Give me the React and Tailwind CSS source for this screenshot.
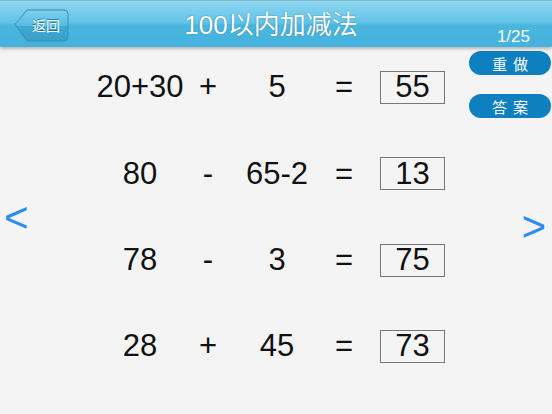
const rows = [
  { a: "20+30", op: "+", b: "5", ans: "55" },
  { a: "80", op: "-", b: "65-2", ans: "13" },
  { a: "78", op: "-", b: "3", ans: "75" },
  { a: "28", op: "+", b: "45", ans: "73" },
];

const BackButton = () => (
  <div className="relative w-[56px] h-[33px] ml-[13px] mt-[8px]">
    <svg width="56" height="33" viewBox="0 0 56 33" className="block">
      <defs>
        <linearGradient id="bb" x1="0" y1="0" x2="0" y2="1">
          <stop offset="0" stopColor="#7fd0ee" />
          <stop offset="0.5" stopColor="#56bde2" />
          <stop offset="0.51" stopColor="#3eaad4" />
          <stop offset="1" stopColor="#3a9fc9" />
        </linearGradient>
      </defs>
      <path
        d="M2 15.5 L14 1 H51 Q55 1 55 5 V28 Q55 32 51 32 H14 Z"
        fill="url(#bb)"
        stroke="#3b8fb4"
        strokeWidth="1"
      />
    </svg>
    <span className="absolute inset-0 flex items-center justify-center pl-[10px] text-[14px] text-white font-['Noto_Sans_CJK_SC',sans-serif] [text-shadow:0_-1px_0_rgba(0,60,90,0.5)]">
      返回
    </span>
  </div>
);

export default function App() {
  return (
    <div className="w-[552px] h-[414px] bg-[#f4f4f4] overflow-hidden font-['Liberation_Sans',Arial,sans-serif] text-[#111]">
      <header className="relative z-10 h-[47px] border-t border-[#7fb9cc] bg-[linear-gradient(to_bottom,#8ed7f1_0%,#5fc3e7_48%,#49b6df_52%,#44b2dc_100%)] shadow-[0_2px_3px_rgba(0,0,0,0.25)] grid grid-cols-[1fr_auto_1fr]">
        <BackButton />
        <div className="pr-[10px] pt-[9px] text-[26px] leading-[30px] text-white font-['Liberation_Sans','Noto_Sans_CJK_SC',sans-serif] [text-shadow:0_0_1px_#3d86a6,0_0_1px_#3d86a6]">
          100以内加减法
        </div>
        <div className="flex justify-end items-end pr-[22px] pb-0 text-[17px] leading-[20px] text-white">
          1/25
        </div>
      </header>

      <div className="flex h-[367px]">
        <div className="w-[90px] pl-[4px] pt-[147px] text-[42px] leading-[48px] text-[#2d8cf4]">
          &lt;
        </div>

        <div className="grid grid-cols-[100px_36px_102px_32px_85px] gap-y-[53.3px] content-start pt-[24px] text-[31px]">
          {rows.map((r, i) => (
            <div key={i} className="contents">
              <div className="h-[33px] flex items-center justify-center">{r.a}</div>
              <div className="h-[33px] flex items-center justify-center">{r.op}</div>
              <div className="h-[33px] flex items-center justify-center">{r.b}</div>
              <div className="h-[33px] flex items-center justify-center">=</div>
              <div className="h-[33px] flex justify-end">
                <div className="w-[65px] h-[33px] border border-[#777] flex items-center justify-center">
                  {r.ans}
                </div>
              </div>
            </div>
          ))}
        </div>

        <div className="flex-1 flex flex-col items-end pt-[4px] pr-[1px]">
          <button className="w-[82px] h-[24px] rounded-full bg-[#0e80c0] text-white text-[15px] tracking-[6px] pl-[6px] font-['Noto_Sans_CJK_SC',sans-serif] leading-none">
            重做
          </button>
          <button className="mt-[19px] w-[82px] h-[24px] rounded-full bg-[#0e80c0] text-white text-[15px] tracking-[6px] pl-[6px] font-['Noto_Sans_CJK_SC',sans-serif] leading-none">
            答案
          </button>
          <div className="mt-[85px] pr-[5px] text-[42px] leading-[48px] text-[#2d8cf4]">
            &gt;
          </div>
        </div>
      </div>
    </div>
  );
}
